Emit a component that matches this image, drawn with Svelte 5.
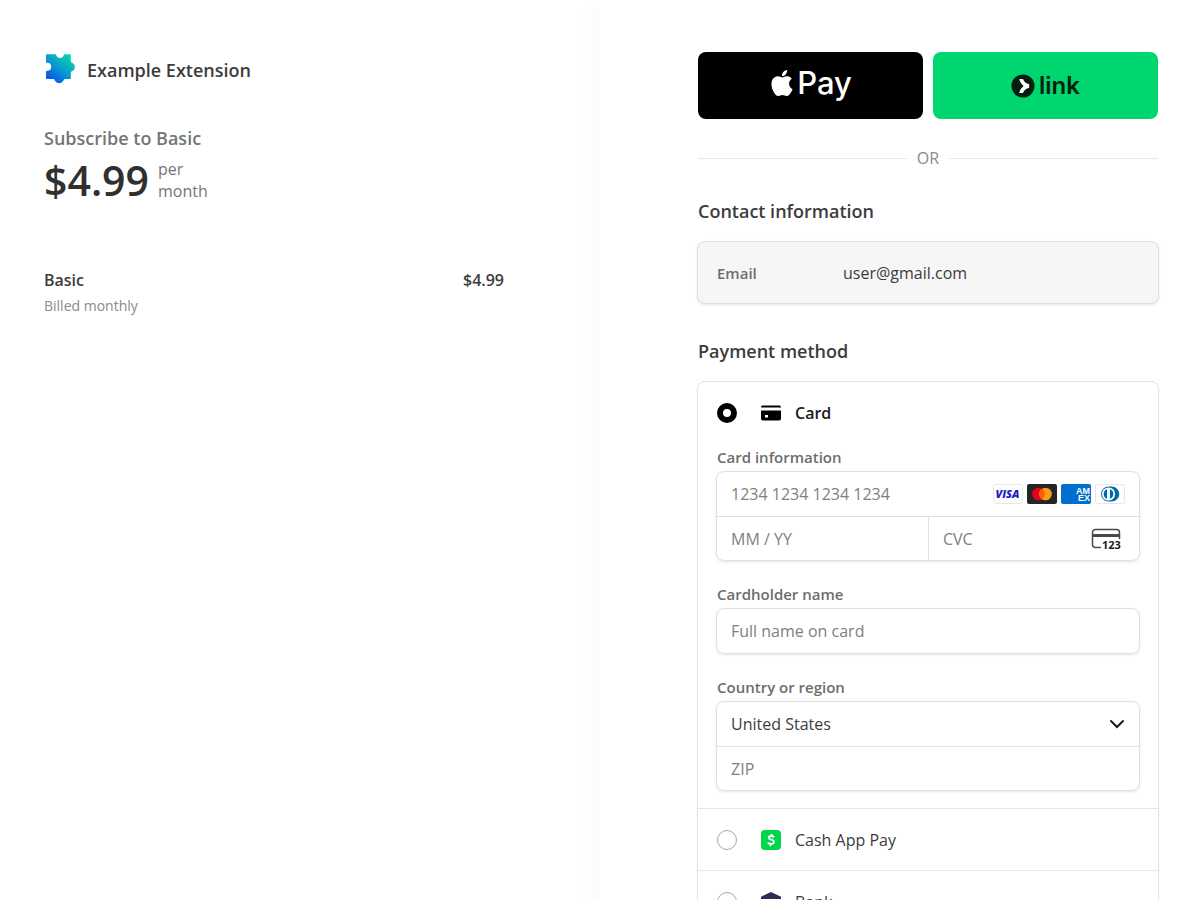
<script lang="ts">
	let method = $state('card')
	let cardNumber = $state('')
	let expiry = $state('')
	let cvc = $state('')
	let name = $state('')
	let country = $state('US')
	let zip = $state('')
</script>

<main>
	<section class="summary">
		<header class="brand">
			<svg width="32" height="32" viewBox="0 -2 32 32" aria-hidden="true">
				<defs>
					<linearGradient id="puzzle" x1="0.1" y1="1" x2="0.9" y2="0">
						<stop offset="0.1" stop-color="#0b55e8" />
						<stop offset="0.5" stop-color="#0a9bd0" />
						<stop offset="1" stop-color="#08e0a8" />
					</linearGradient>
				</defs>
				<path
					fill="url(#puzzle)"
					d="M3 .3h8.300c.8 0 1 .7 1.100 1.500a4 4 0 0 0 7.200 0c.1-.8.3-1.500 1.100-1.500H26c.5 0 .8.3.8.8V7.500c0 .8.5 1 1.200 1.300a4.600 4.600 0 0 1 0 8.500c-.7.3-1.200.6-1.200 1.400V24.300c0 .5-.3.8-.8.8h-5c-.8 0-1 .6-1.400 1.400a5 5 0 0 1-8.800 0c-.4-.8-.7-1.400-1.400-1.400H3c-.6 0-1-.3-1-.8v-6.500c0-.6.4-.9 1.200-1a4 4 0 0 0 0-8C2.400 8.700 2 8.500 2 7.800V1.300c0-.6.4-1 1-1z"
				/>
			</svg>
			<h1>Example Extension</h1>
		</header>

		<h2 class="plan">Subscribe to Basic</h2>
		<div class="price">
			<span class="amount">$4.99</span>
			<span class="period">per<br />month</span>
		</div>

		<div class="line-item">
			<div>
				<div class="item-name">Basic</div>
				<div class="item-note">Billed monthly</div>
			</div>
			<div class="item-name">$4.99</div>
		</div>
	</section>

	<section class="checkout">
		<div class="express">
			<button type="button" class="apple" aria-label="Apple Pay">
				<svg width="26" height="26" viewBox="0 0 24 24" aria-hidden="true">
					<path
						fill="#fff"
						d="M12.152 6.896c-.948 0-2.415-1.078-3.960-1.040-2.040.027-3.910 1.183-4.961 3.014-2.117 3.675-.546 9.103 1.519 12.090 1.013 1.454 2.208 3.090 3.792 3.039 1.520-.065 2.090-.987 3.935-.987 1.831 0 2.350.987 3.960.948 1.637-.026 2.676-1.480 3.676-2.948 1.156-1.688 1.636-3.325 1.662-3.415-.039-.013-3.182-1.221-3.220-4.857-.026-3.040 2.480-4.494 2.597-4.559-1.429-2.090-3.623-2.324-4.390-2.376-2-.156-3.675 1.090-4.610 1.090zM15.530 3.830c.843-1.012 1.400-2.427 1.245-3.830-1.207.052-2.662.805-3.532 1.818-.780.896-1.454 2.338-1.273 3.714 1.338.104 2.715-.688 3.559-1.701"
					/>
				</svg>
				<span>Pay</span>
			</button>
			<button type="button" class="link">
				<svg width="24" height="24" viewBox="0 0 24 24" aria-hidden="true">
					<circle cx="12" cy="12" r="11.500" fill="#011e0f" />
					<path fill="#fff" d="M12 5H8.200c.6 2.800 2.200 5.200 4.400 7-2.200 1.700-3.800 4.100-4.400 7H12c.8-2.500 3.200-4.700 6.200-5.200v-3.600C15.200 9.700 12.800 7.600 12 5z" />
				</svg>
				<span>link</span>
			</button>
		</div>

		<div class="divider">OR</div>

		<h2>Contact information</h2>
		<div class="contact">
			<span class="contact-label">Email</span>
			<span>user@gmail.com</span>
		</div>

		<h2>Payment method</h2>
		<div class="methods">
			<div class="method">
				<label class="method-head" class:selected={method === 'card'}>
					<input type="radio" name="method" value="card" bind:group={method} />
					<svg width="20" height="20" viewBox="0 0 20 20" aria-hidden="true">
						<path d="M0 4.500C0 3.100.9 2.500 2 2.500h16c1.100 0 2 .6 2 2z" />
						<path fill-rule="evenodd" d="M0 7.500h20v8c0 1.200-.8 2-2 2H2c-1.200 0-2-.8-2-2zM4 12v2.500h3V12z" />
					</svg>
					<span>Card</span>
				</label>

				{#if method === 'card'}
					<div class="card-form">
						<label for="card-number">Card information</label>
						<div class="group">
							<div class="row">
								<input id="card-number" placeholder="1234 1234 1234 1234" bind:value={cardNumber} />
								<div class="brands">
									<svg width="30" height="20" viewBox="0 0 30 20" role="img" aria-label="Visa">
										<rect x="0.500" y="0.500" width="29" height="19" rx="2" fill="#fff" stroke="#e6e6e6" />
										<text class="visa" x="14.500" y="14" text-anchor="middle">VISA</text>
									</svg>
									<svg width="30" height="20" viewBox="0 0 30 20" role="img" aria-label="Mastercard">
										<rect width="30" height="20" rx="2" fill="#252525" />
										<circle cx="11.500" cy="10" r="6.300" fill="#eb001b" />
										<circle cx="18.500" cy="10" r="6.300" fill="#f79e1b" />
										<path fill="#ff5f00" d="M15 4.800a6.300 6.300 0 0 1 0 10.400 6.300 6.300 0 0 1 0-10.400z" />
									</svg>
									<svg width="30" height="20" viewBox="0 0 30 20" role="img" aria-label="American Express">
										<rect width="30" height="20" rx="2" fill="#016fd0" />
										<text class="amex" x="15" y="10">AM</text>
										<text class="amex" x="17" y="17">EX</text>
									</svg>
									<svg width="30" height="20" viewBox="0 0 30 20" role="img" aria-label="Diners Club">
										<rect x="0.500" y="0.500" width="29" height="19" rx="2" fill="#fff" stroke="#e6e6e6" />
										<path fill="#0069aa" d="M13.500 2.500h3a7.800 7.500 0 0 1 0 15h-3a7.500 7.500 0 0 1 0-15z" />
										<circle cx="13.500" cy="10" r="6.600" fill="#fff" />
										<path fill="#0069aa" d="M12 5.300v9.400a5 5 0 0 1 0-9.400zM15 5.300a5 5 0 0 1 0 9.400z" />
									</svg>
								</div>
							</div>
							<div class="row split">
								<input aria-label="Expiration" placeholder="MM / YY" bind:value={expiry} />
								<div class="cvc">
									<input aria-label="CVC" placeholder="CVC" bind:value={cvc} />
									<svg width="30" height="22" viewBox="0 0 30 22" aria-hidden="true">
										<path fill="none" stroke="#484848" stroke-width="1.500" d="M10 19.500H4.500a3 3 0 0 1-3-3v-12a3 3 0 0 1 3-3h21a3 3 0 0 1 3 3V11" />
										<path fill="#484848" d="M1 6h28v3H1z" />
										<text class="digits" x="11" y="21">123</text>
									</svg>
								</div>
							</div>
						</div>

						<label for="name">Cardholder name</label>
						<div class="group">
							<div class="row">
								<input id="name" placeholder="Full name on card" bind:value={name} />
							</div>
						</div>

						<label for="country">Country or region</label>
						<div class="group">
							<div class="row">
								<select id="country" bind:value={country}>
									<option value="US">United States</option>
								</select>
								<svg class="chevron" width="16" height="16" viewBox="0 0 16 16" aria-hidden="true">
									<path fill="none" stroke="#1a1a1a" stroke-width="2" stroke-linecap="round" d="M2 5l6 6 6-6" />
								</svg>
							</div>
							<div class="row">
								<input aria-label="ZIP" placeholder="ZIP" bind:value={zip} />
							</div>
						</div>
					</div>
				{/if}
			</div>

			<div class="method">
				<label class="method-head" class:selected={method === 'cashapp'}>
					<input type="radio" name="method" value="cashapp" bind:group={method} />
					<svg width="20" height="20" viewBox="0 0 20 20" aria-hidden="true">
						<rect width="20" height="20" rx="4" fill="#00d54b" />
						<path fill="none" stroke="#fff" stroke-width="1.800" d="M13.200 7.200C12.400 6.500 11.300 6 10.100 6 8.800 6 7.700 6.500 7.700 7.700c0 2.500 5.200 1.500 5.200 4.100 0 1.400-1.300 2.100-2.800 2.100-1.300 0-2.500-.4-3.400-1.300M10.900 4l-.4 2M9.600 14l-.4 2.200" />
					</svg>
					<span>Cash App Pay</span>
				</label>
			</div>

			<div class="method">
				<label class="method-head" class:selected={method === 'bank'}>
					<input type="radio" name="method" value="bank" bind:group={method} />
					<svg width="20" height="20" viewBox="0 0 20 20" aria-hidden="true">
						<path fill="#2c2c54" d="M10 0l9.500 4.500c.3.200.5.500.5.800V7H0V5.300c0-.3.200-.6.500-.8zM2 9h3v6H2zM8.500 9h3v6h-3zM15 9h3v6h-3zM0 16h20v3H0z" />
					</svg>
					<span>Bank</span>
				</label>
			</div>
		</div>
	</section>
</main>

<style>
	:global(body) {
		margin: 0;
		background: #fff;
	}

	main {
		display: grid;
		grid-template-columns: 1fr 1fr;
		min-height: 100vh;
		font-family: "Open Sans", "Noto Sans", sans-serif;
		font-size: 16px;
		line-height: 24px;
		color: #3c3c3c;
	}

	h1,
	h2 {
		margin: 0;
		font-size: 18px;
		line-height: 24px;
		font-weight: 600;
	}

	input,
	select,
	button {
		font: inherit;
		color: inherit;
		box-sizing: border-box;
	}

	.summary {
		padding: 52px 96px 0 44px;
	}

	.brand {
		display: flex;
		gap: 11px;
	}

	.brand h1 {
		line-height: 36px;
	}

	.plan {
		margin-top: 38px;
		color: #757575;
	}

	.price {
		display: flex;
		align-items: center;
		gap: 9px;
		height: 60px;
	}

	.amount {
		font-size: 41px;
		line-height: 60px;
		font-weight: 600;
		color: #303030;
	}

	.period {
		line-height: 22px;
		font-weight: 500;
		color: #757575;
	}

	.line-item {
		display: flex;
		justify-content: space-between;
		margin-top: 58px;
	}

	.item-name {
		font-weight: 600;
	}

	.item-note {
		margin-top: 2px;
		font-size: 14px;
		color: #8a8a8a;
	}

	.checkout {
		padding: 52px 42px 40px 98px;
		box-shadow: 0 0 30px rgba(0, 0, 0, 0.03);
	}

	.express {
		display: grid;
		grid-template-columns: 1fr 1fr;
		gap: 10px;
	}

	.express button {
		display: flex;
		align-items: center;
		justify-content: center;
		height: 67px;
		padding: 0;
		border: none;
		border-radius: 8px;
		font-family: Inter, sans-serif;
		cursor: pointer;
	}

	.express .apple {
		gap: 2px;
		padding-bottom: 5px;
		background: #000;
		color: #fff;
		font-size: 31px;
		font-weight: 500;
	}

	.express .link {
		gap: 4px;
		background: #00d66f;
		color: #011e0f;
		font-size: 24px;
		font-weight: 600;
	}

	.divider {
		display: flex;
		align-items: center;
		gap: 10px;
		margin: 27px 0 29px;
		color: #8a8a8a;
	}

	.divider::before,
	.divider::after {
		content: "";
		flex: 1;
		height: 1px;
		background: #e8e8e8;
	}

	.contact {
		display: grid;
		grid-template-columns: 126px 1fr;
		align-items: center;
		height: 63px;
		margin: 18px -1px 35px;
		padding: 0 19px;
		box-sizing: border-box;
		border: 1px solid #e0e0e0;
		border-radius: 8px;
		background: #f6f6f6;
		box-shadow: 0 1px 3px rgba(0, 0, 0, 0.1);
	}

	.contact-label {
		font-size: 15px;
		font-weight: 600;
		color: #6d6d6d;
	}

	.methods {
		margin: 18px -1px 0;
		border: 1px solid #e3e3e3;
		border-radius: 8px;
		box-shadow: 0 1px 2px rgba(0, 0, 0, 0.06);
	}

	.method + .method {
		border-top: 1px solid #e6e6e6;
	}

	.method-head {
		display: flex;
		align-items: center;
		height: 61px;
		padding: 0 19px;
		cursor: pointer;
	}

	.method-head svg {
		margin: 0 14px 0 24px;
	}

	.selected {
		font-weight: 600;
		color: #1a1a1a;
	}

	input[type="radio"] {
		appearance: none;
		width: 20px;
		height: 20px;
		margin: 0;
		border: 1px solid #a8a8a8;
		border-radius: 50%;
		background: #fff;
	}

	input[type="radio"]:checked {
		border: 6px solid #000;
	}

	.card-form {
		padding: 4px 18px 17px;
	}

	.card-form label {
		display: block;
		padding: 0 1px;
		font-size: 15px;
		line-height: 20px;
		font-weight: 600;
		color: #6d6d6d;
	}

	.group {
		margin: 4px 0 23px;
		border: 1px solid #e0e0e0;
		border-radius: 8px;
		box-shadow: 0 1px 3px rgba(0, 0, 0, 0.1);
	}

	.group:last-child {
		margin-bottom: 0;
	}

	.row {
		display: flex;
		align-items: center;
		height: 44px;
		box-sizing: border-box;
	}

	.row + .row {
		border-top: 1px solid #e0e0e0;
	}

	.row input,
	.row select {
		flex: 1;
		width: 100%;
		min-width: 0;
		height: 100%;
		padding: 0 14px;
		border: none;
		border-radius: 8px;
		background: none;
		appearance: none;
	}

	.row input::placeholder {
		color: #808080;
		opacity: 1;
	}

	.brands {
		display: flex;
		gap: 4px;
		margin-right: 14px;
	}

	.split {
		display: grid;
		grid-template-columns: 1fr 1fr;
		align-items: stretch;
	}

	.cvc {
		display: flex;
		min-width: 0;
		align-items: center;
		border-left: 1px solid #e0e0e0;
	}

	.cvc svg {
		flex: none;
		margin-right: 18px;
	}

	.chevron {
		margin: 0 14px 0 -30px;
		pointer-events: none;
	}

	.visa {
		font: italic 800 11px "Open Sans", sans-serif;
		fill: #1a1fc4;
	}

	.amex {
		font: 700 9px "Liberation Sans", sans-serif;
		fill: #fff;
	}

	.digits {
		font: 700 11px "Open Sans", sans-serif;
		fill: #1a1a1a;
	}
</style>
